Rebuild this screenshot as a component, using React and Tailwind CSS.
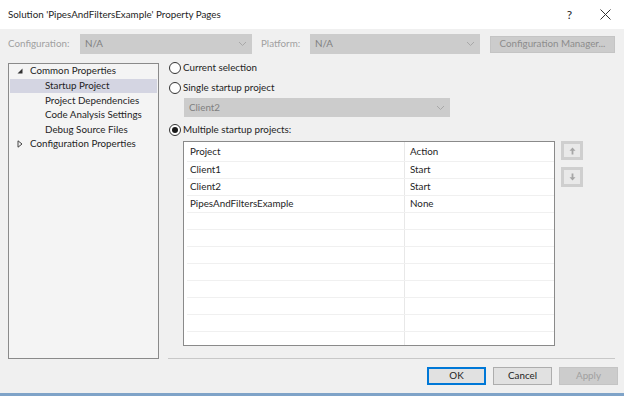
import React from 'react';

const Chevron = () => (
  <svg width="9" height="6" viewBox="0 0 9 6" className="shrink-0">
    <polyline points="1,1 4.5,4.5 8,1" fill="none" stroke="#a8a8a8" strokeWidth="1" />
  </svg>
);

const Dropdown = ({ value, className }) => (
  <div className={`flex items-center justify-between bg-[#cccccc] px-[5px] text-[#7f7f7f] ${className}`}>
    <span>{value}</span>
    <Chevron />
  </div>
);

const Radio = ({ checked, label, className }) => (
  <div className={`flex items-center h-[12px] ${className}`}>
    <span className="w-[12px] h-[12px] rounded-full border border-[#333333] bg-white flex items-center justify-center shrink-0">
      {checked && <span className="w-[6px] h-[6px] rounded-full bg-[#1a1a1a]" />}
    </span>
    <span className="ml-[2px] text-[#1e1e1e]">{label}</span>
  </div>
);

const TreeRow = ({ label, indent, icon, selected }) => (
  <div className={`flex items-center h-[14.6px] mx-px ${selected ? 'bg-[#d4d5e2]' : ''}`}>
    <span className={`flex items-center justify-center shrink-0 w-[6px] ml-[7px] ${indent ? 'mr-[22px]' : 'mr-[7px]'}`}>
      {icon === 'open' && (
        <svg width="6" height="6" viewBox="0 0 6 6">
          <polygon points="5.5,0.5 5.5,5.5 0.5,5.5" fill="#333333" />
        </svg>
      )}
      {icon === 'closed' && (
        <svg width="6" height="8" viewBox="0 0 6 8">
          <polygon points="1,0.8 5,4 1,7.2" fill="none" stroke="#444444" strokeWidth="1" />
        </svg>
      )}
    </span>
    <span className="text-[#1e1e1e] whitespace-nowrap">{label}</span>
  </div>
);

const rows = [
  ['Client1', 'Start'],
  ['Client2', 'Start'],
  ['PipesAndFiltersExample', 'None'],
  ['', ''], ['', ''], ['', ''], ['', ''], ['', ''], ['', ''], ['', ''], ['', ''],
];

const ArrowButton = ({ up, className }) => (
  <div className={`w-[22px] h-[19px] border-[3px] border-[#cfcfcf] bg-[#e9e9e9] flex items-center justify-center ${className}`}>
    <svg width="7" height="8" viewBox="0 0 7 8">
      {up ? (
        <path d="M3.5 0.5 L6.5 3.8 H4.4 V7.5 H2.6 V3.8 H0.5 Z" fill="#a6a6a6" />
      ) : (
        <path d="M3.5 7.5 L6.5 4.2 H4.4 V0.5 H2.6 V4.2 H0.5 Z" fill="#a6a6a6" />
      )}
    </svg>
  </div>
);

export default function App() {
  return (
    <div className="w-[624px] h-[396px] flex flex-col bg-[#f0f0f0] text-[9.8px] leading-none font-['Lato','Noto_Sans',sans-serif] overflow-hidden">
      {/* title bar */}
      <div className="h-[29px] bg-white flex items-center pl-[8px] text-[#1e1e1e]">
        <span>Solution 'PipesAndFiltersExample' Property Pages</span>
        <span className="ml-auto text-[12px]">?</span>
        <svg width="11" height="11" viewBox="0 0 11 11" className="ml-[28px] mr-[13px]">
          <path d="M0.5 0.5 L10.5 10.5 M10.5 0.5 L0.5 10.5" stroke="#333333" strokeWidth="1" />
        </svg>
      </div>

      {/* configuration toolbar */}
      <div className="mt-[5px] h-[20px] flex items-center pl-[8px]">
        <span className="w-[72px] text-[#a0a0a0]">Configuration:</span>
        <Dropdown value="N/A" className="w-[172px] h-[20px]" />
        <span className="ml-[9px] w-[49px] text-[#a0a0a0]">Platform:</span>
        <Dropdown value="N/A" className="w-[170px] h-[20px]" />
        <div className="ml-[10px] w-[125px] h-[17px] bg-[#cccccc] border border-[#c4c4c4] flex items-center justify-center text-[#8c8c8c]">
          Configuration Manager...
        </div>
      </div>

      {/* body */}
      <div className="mt-[9px] flex pl-[8px]">
        <div className="w-[151px] h-[296px] border border-[#8a8a8a] bg-[#f4f4f4] flex flex-col overflow-hidden">
          <TreeRow label="Common Properties" icon="open" />
          <TreeRow label="Startup Project" indent selected />
          <TreeRow label="Project Dependencies" indent />
          <TreeRow label="Code Analysis Settings" indent />
          <TreeRow label="Debug Source Files" indent />
          <TreeRow label="Configuration Properties" icon="closed" />
        </div>

        <div className="ml-[9px] flex-1 flex flex-col">
          <Radio label="Current selection" className="-mt-px ml-[1px]" />
          <Radio label="Single startup project" className="mt-[8px] ml-[1px]" />
          <Dropdown value="Client2" className="mt-[4px] ml-[16px] w-[266px] h-[19px]" />
          <Radio checked label="Multiple startup projects:" className="mt-[7px] ml-[1px]" />

          <div className="mt-[5px] ml-[15px] flex">
            <div className="w-[372px] h-[205px] border border-[#8a8a8a] bg-white overflow-hidden">
              <div className="flex h-[19px] items-center">
                <div className="w-[221px] pl-[6px] border-r border-[#e8e8e8] h-full flex items-center text-[#1e1e1e]">Project</div>
                <div className="pl-[5px] text-[#1e1e1e]">Action</div>
              </div>
              {rows.map(([p, a], i) => (
                <div key={i} className="flex h-[17px] ml-[3px] border-t border-[#f0f0f0]">
                  <div className="w-[218px] pl-[3px] border-r border-[#e8e8e8] flex items-center text-[#1e1e1e]">{p}</div>
                  <div className="pl-[5px] flex items-center text-[#1e1e1e]">{a}</div>
                </div>
              ))}
            </div>
            <div className="ml-[6px] flex flex-col">
              <ArrowButton up />
              <ArrowButton className="mt-[7px] h-[20px]" />
            </div>
          </div>

          <div className="mt-[12px] h-px w-[447px] bg-[#c8c8c8]" />

          <div className="mt-[8px] flex justify-end pr-[6px] gap-[7px]">
            <div className="w-[59px] h-[18px] bg-[#e1e1e1] border-2 border-[#0078d7] flex items-center justify-center text-[#1e1e1e]">OK</div>
            <div className="w-[59px] h-[18px] bg-[#e1e1e1] border border-[#adadad] flex items-center justify-center text-[#1e1e1e]">Cancel</div>
            <div className="w-[59px] h-[18px] bg-[#cccccc] border border-[#c4c4c4] flex items-center justify-center text-[#a0a0a0]">Apply</div>
          </div>
        </div>
      </div>

      <div className="mt-auto h-[3px] bg-[#7fa3c8]" />
    </div>
  );
}
